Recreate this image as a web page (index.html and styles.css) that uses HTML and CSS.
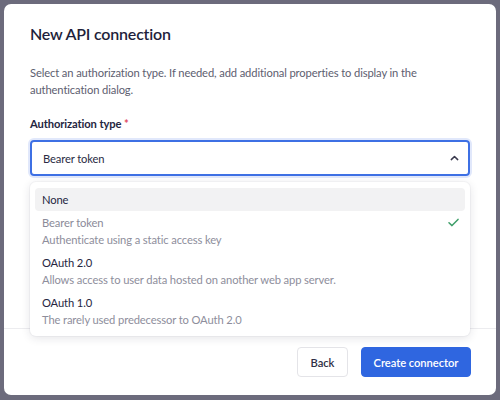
FILE: index.html
```html
<!DOCTYPE html>
<html>
<head>
<meta charset="utf-8">
<link rel="stylesheet" href="styles.css">
</head>
<body>
<div class="modal">
  <div class="modal-body">
    <h1 class="title">New API connection</h1>
    <p class="desc">Select an authorization type. If needed, add additional properties to display in the authentication dialog.</p>
    <div class="field">
      <label class="label">Authorization type <span class="req">*</span></label>
      <div class="select">
        <span class="select-value">Bearer token</span>
        <svg class="chevron" width="9" height="6" viewBox="0 0 9 6"><path d="M1.3 4.6 L4.5 1.5 L7.7 4.6" fill="none" stroke="#3a3a4e" stroke-width="1.5" stroke-linecap="round" stroke-linejoin="round"/></svg>
      </div>
      <ul class="menu">
        <li class="option active"><div class="opt-title">None</div></li>
        <li class="option selected">
          <div class="opt-title">Bearer token</div>
          <div class="opt-desc">Authenticate using a static access key</div>
          <svg class="check" width="11" height="9" viewBox="0 0 11 9"><path d="M1 4.8 L4 7.6 L10 1.4" fill="none" stroke="#3f9f6a" stroke-width="1.5" stroke-linecap="round" stroke-linejoin="round"/></svg>
        </li>
        <li class="option">
          <div class="opt-title">OAuth 2.0</div>
          <div class="opt-desc">Allows access to user data hosted on another web app server.</div>
        </li>
        <li class="option">
          <div class="opt-title">OAuth 1.0</div>
          <div class="opt-desc">The rarely used predecessor to OAuth 2.0</div>
        </li>
      </ul>
    </div>
  </div>
  <div class="modal-footer">
    <button class="btn btn-secondary">Back</button>
    <button class="btn btn-primary">Create connector</button>
  </div>
</div>
</body>
</html>
```
FILE: styles.css
```css
* { box-sizing: border-box; }
html, body { height: 100%; }
body {
  margin: 0;
  padding: 4px;
  background: #6c6b7c;
  font-family: "Lato", "Noto Sans", sans-serif;
  color: #1f2040;
}
.modal {
  height: 391px;
  background: #fff;
  border-radius: 7px;
  display: flex;
  flex-direction: column;
}
.modal-body {
  flex: 1;
  padding: 18px 26px 0 26px;
}
.title {
  margin: 0;
  font-size: 16px;
  letter-spacing: -0.2px;
  line-height: 24px;
  font-weight: 600;
  color: #1e1f3b;
}
.desc {
  margin: 18px 0 0 0;
  font-size: 11.2px;
  letter-spacing: -0.12px;
  line-height: 17px;
  color: #5d5e70;
}
.field {
  position: relative;
  margin-top: 17px;
}
.label {
  display: block;
  font-size: 11.2px;
  letter-spacing: -0.12px;
  line-height: 18px;
  font-weight: 700;
  color: #25263f;
}
.req { color: #e0475a; }
.select {
  margin-top: 7px;
  height: 36px;
  border: 2px solid #3e70e4;
  border-radius: 4px;
  box-shadow: 0 0 0 2px #e1e8fb;
  display: flex;
  align-items: center;
  justify-content: space-between;
  padding: 0 9px 0 11px;
  font-size: 11.2px;
  letter-spacing: -0.12px;
  color: #2a2b44;
}
.menu {
  position: absolute;
  top: 67px;
  left: 0;
  right: 0;
  margin: 0;
  list-style: none;
  padding: 6px 5px 5px 5px;
  background: #fff;
  border-radius: 6px;
  box-shadow: 0 2px 10px rgba(30, 30, 60, 0.12), 0 0 0 1px rgba(30,30,60,0.03);
}
.option {
  position: relative;
  padding: 3px 7px;
  border-radius: 4px;
  font-size: 11.2px;
  letter-spacing: -0.12px;
  line-height: 17px;
  color: #25263f;
}
.option.active { background: #f2f2f3; }
.option.selected .opt-title { color: #8b8b99; }
.opt-desc { color: #8e8e9c; }
.check {
  position: absolute;
  right: 6px;
  top: 7px;
}
.modal-footer {
  border-top: 1px solid #ececef;
  padding: 18px 25px 18px 25px;
  display: flex;
  justify-content: flex-end;
  gap: 13px;
}
.btn {
  height: 30px;
  border-radius: 4px;
  font-family: inherit;
  font-size: 11.2px;
  letter-spacing: -0.05px;
  font-weight: 600;
  padding: 0;
  white-space: nowrap;
  cursor: pointer;
}
.btn-secondary {
  background: #fff;
  border: 1px solid #e4e4e8;
  color: #2e2f45;
  width: 51px;
}
.btn-primary {
  background: #2f66e0;
  border: 1px solid #2f66e0;
  color: #fff;
  width: 110px;
}
```
